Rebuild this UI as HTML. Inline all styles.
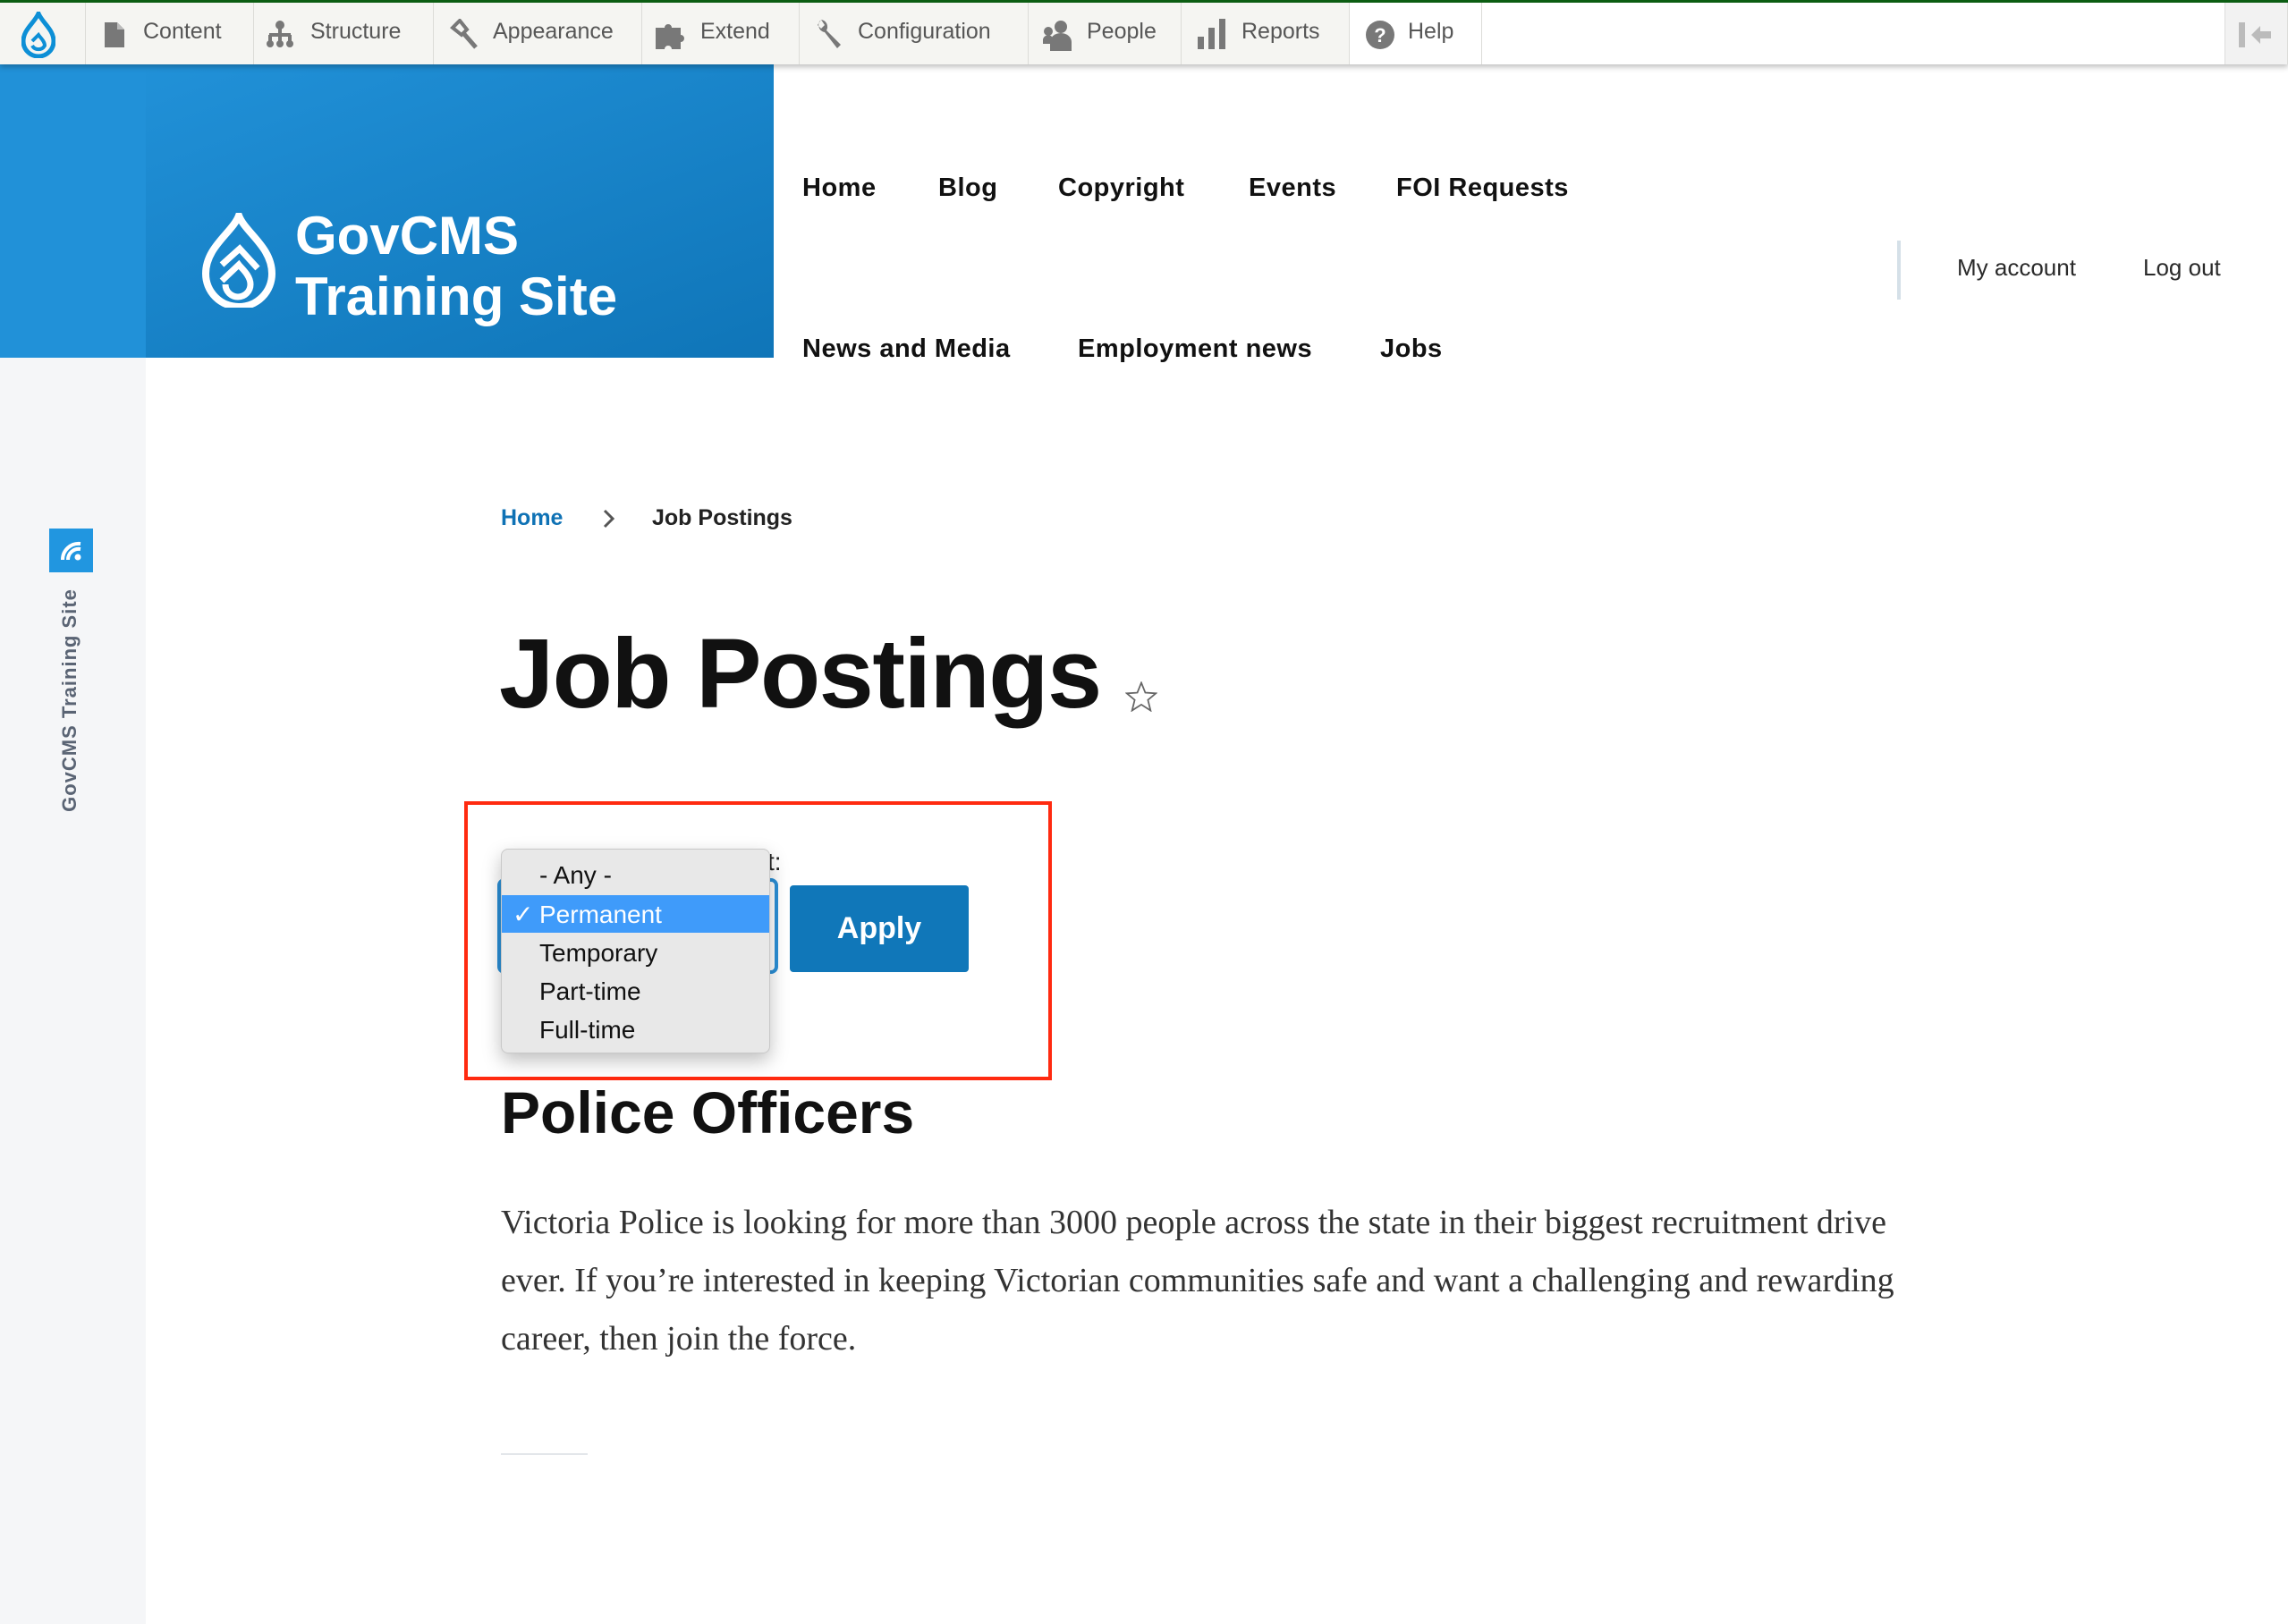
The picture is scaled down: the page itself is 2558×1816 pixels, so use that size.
<!DOCTYPE html>
<html><head><meta charset="utf-8"><style>
*{margin:0;padding:0;box-sizing:border-box}
body{width:2558px;height:1816px;position:relative;background:#fff;font-family:"Liberation Sans",sans-serif;overflow:hidden}
.a{position:absolute;white-space:nowrap}
.tb{position:absolute;left:0;top:0;width:2558px;height:72px;background:#fff;border-top:3px solid #0b5d12;box-shadow:0 3px 6px rgba(0,0,0,.25);z-index:5}
.ti{position:absolute;top:0;height:69px;background:#f5f5f2;border-right:1px solid #dcdcd8}
.tt{position:absolute;top:18px;font-size:25px;color:#565656}
.nav{font-weight:bold;font-size:29px;color:#111;letter-spacing:.5px}
.opt{position:absolute;left:0;width:301px;height:43px;font-size:28px;color:#111;padding-left:42px;line-height:43px}
</style></head><body>
<div class="tb">
 <div class="ti" style="left:0;width:96px"></div>
 <svg class="a" style="left:24px;top:10px" width="38" height="52" viewBox="0 0 38 52"><path d="M19 2 C23 12 36 20 36 33 A17 17 0 0 1 2 33 C2 20 15 12 19 2Z" fill="none" stroke="#0d8fd6" stroke-width="5"/><path d="M12 38 A8 8 0 0 0 26 38 C26 33 21 29 19 26 L12 33" fill="none" stroke="#0d8fd6" stroke-width="4"/></svg>
 <div class="ti" style="left:96px;width:188px"></div>
 <div class="ti" style="left:284px;width:201px"></div>
 <div class="ti" style="left:485px;width:233px"></div>
 <div class="ti" style="left:718px;width:176px"></div>
 <div class="ti" style="left:894px;width:256px"></div>
 <div class="ti" style="left:1150px;width:171px"></div>
 <div class="ti" style="left:1321px;width:188px"></div>
 <div class="ti" style="left:1509px;width:148px;background:#fff"></div>
 <div class="ti" style="left:2487px;width:71px;background:#f2f2f2;border-left:1px solid #ddd"></div>
 <svg class="a" style="left:117px;top:22px" width="22" height="28"><path d="M0 0h14l8 8v20H0z" fill="#787878"/><path d="M14 0v8h8" fill="#bbb"/></svg>
 <svg class="a" style="left:298px;top:20px" width="30" height="32"><circle cx="15" cy="5" r="5" fill="#787878"/><rect x="13" y="8" width="4" height="10" fill="#787878"/><rect x="3" y="14" width="24" height="4" fill="#787878"/><circle cx="4" cy="26" r="4" fill="#787878"/><circle cx="15" cy="26" r="4" fill="#787878"/><circle cx="26" cy="26" r="4" fill="#787878"/><rect x="2" y="16" width="4" height="8" fill="#787878"/><rect x="24" y="16" width="4" height="8" fill="#787878"/><rect x="13" y="16" width="4" height="8" fill="#787878"/></svg>
 <svg class="a" style="left:502px;top:18px" width="32" height="34"><path d="M4 10 L12 2 L20 12 L14 18Z" fill="none" stroke="#787878" stroke-width="4"/><path d="M16 16 L30 32" stroke="#787878" stroke-width="5"/></svg>
 <svg class="a" style="left:733px;top:20px" width="34" height="32"><path d="M0 8h10a4 4 0 1 1 8 0h10v8a4 4 0 1 1 0 8v8H18a4 4 0 1 0-8 0H0z" fill="#787878"/></svg>
 <svg class="a" style="left:910px;top:17px" width="32" height="36"><path d="M8 2a8 8 0 0 0 4 14l14 18 4-4-16-16a8 8 0 0 0-6-12l4 6-4 4-4-4z" fill="#787878"/></svg>
 <svg class="a" style="left:1166px;top:18px" width="34" height="36"><circle cx="20" cy="9" r="7" fill="#787878"/><path d="M8 36v-10a12 10 0 0 1 24 0v10z" fill="#787878"/><circle cx="6" cy="14" r="5" fill="#787878"/><path d="M0 28v-5a6 6 0 0 1 10-3v8z" fill="#787878"/></svg>
 <svg class="a" style="left:1339px;top:18px" width="32" height="34"><rect x="0" y="20" width="7" height="14" fill="#787878"/><rect x="12" y="10" width="7" height="24" fill="#787878"/><rect x="24" y="0" width="7" height="34" fill="#787878"/></svg>
 <svg class="a" style="left:1527px;top:20px" width="32" height="32"><circle cx="16" cy="16" r="16" fill="#787878"/><text x="16" y="24" text-anchor="middle" font-size="22" font-weight="bold" fill="#fff" font-family="Liberation Sans">?</text></svg>
 <div class="tt" style="left:160px">Content</div>
 <div class="tt" style="left:347px">Structure</div>
 <div class="tt" style="left:551px">Appearance</div>
 <div class="tt" style="left:783px">Extend</div>
 <div class="tt" style="left:959px">Configuration</div>
 <div class="tt" style="left:1215px">People</div>
 <div class="tt" style="left:1388px">Reports</div>
 <div class="tt" style="left:1574px">Help</div>
 <svg class="a" style="left:2503px;top:20px" width="40" height="32"><rect x="0" y="2" width="7" height="28" fill="#bbb"/><path d="M14 16 L24 6 V12 H36 V20 H24 V26Z" fill="#bbb"/></svg>
</div>
<div class="a" style="left:0;top:72px;width:163px;height:1744px;background:#f5f6f8"></div>
<div class="a" style="left:0;top:72px;width:163px;height:328px;background:#2191d8"></div>
<div class="a" style="left:163px;top:72px;width:702px;height:328px;background:linear-gradient(160deg,#2191d8,#0f75b8)"></div>
<svg class="a" style="left:226px;top:238px" width="82" height="106" viewBox="0 0 82 106"><path d="M41 3 C48 22 78 38 78 68 A37 37 0 0 1 4 68 C4 38 34 22 41 3Z" fill="none" stroke="#fff" stroke-width="8"/><path d="M26 80 A14 14 0 0 0 54 80 C54 70 44 62 41 58 L22 76 M22 58 L42 40 L62 62" fill="none" stroke="#fff" stroke-width="7"/></svg>
<div class="a" style="left:330px;top:230px;font-size:60px;font-weight:bold;color:#fff;line-height:68px">GovCMS<br>Training Site</div>
<div class="a nav" style="left:897px;top:194px">Home</div>
<div class="a nav" style="left:1049px;top:194px">Blog</div>
<div class="a nav" style="left:1183px;top:194px">Copyright</div>
<div class="a nav" style="left:1396px;top:194px">Events</div>
<div class="a nav" style="left:1561px;top:194px">FOI Requests</div>
<div class="a nav" style="left:897px;top:374px">News and Media</div>
<div class="a nav" style="left:1205px;top:374px">Employment news</div>
<div class="a nav" style="left:1543px;top:374px">Jobs</div>
<div class="a" style="left:2121px;top:269px;width:4px;height:66px;background:#d5e0e8"></div>
<div class="a" style="left:2188px;top:284px;font-size:26px;color:#2a2a2a;font-weight:500">My account</div>
<div class="a" style="left:2396px;top:284px;font-size:26px;color:#2a2a2a;font-weight:500">Log out</div>
<div class="a" style="left:55px;top:591px;width:49px;height:49px;background:#2196e0"></div>
<svg class="a" style="left:64px;top:600px" width="32" height="32"><path d="M6 26 A18 18 0 0 1 26 8 M12 26 A12 12 0 0 1 26 14" fill="none" stroke="#fff" stroke-width="4"/><circle cx="23" cy="23" r="3.5" fill="#fff"/></svg>
<div class="a" style="left:78px;top:783px;transform:translate(-50%,-50%) rotate(-90deg);font-size:22px;font-weight:bold;color:#5a6474;letter-spacing:1px">GovCMS Training Site</div>
<div class="a" style="left:560px;top:565px;font-size:25px;font-weight:bold;color:#0f72b5">Home</div>
<svg class="a" style="left:673px;top:568px" width="16" height="24"><path d="M3 3 L12 12 L3 21" fill="none" stroke="#555" stroke-width="3"/></svg>
<div class="a" style="left:729px;top:565px;font-size:25px;font-weight:bold;color:#222">Job Postings</div>
<div class="a" style="left:558px;top:690px;font-size:110px;font-weight:bold;color:#111;letter-spacing:-1.5px">Job Postings</div>
<svg class="a" style="left:1258px;top:762px" width="36" height="34" viewBox="0 0 24 23"><path d="M12 1 L15 8.5 L23 9 L17 14 L19 22 L12 17.5 L5 22 L7 14 L1 9 L9 8.5Z" fill="none" stroke="#666" stroke-width="1.2"/></svg>
<div class="a" style="left:519px;top:896px;width:657px;height:312px;border:4px solid #ff2a10"></div>
<div class="a" style="left:556px;top:982px;width:314px;height:107px;border:4px solid #2b8fd6;border-radius:8px"></div>
<div class="a" style="left:858px;top:948px;font-size:28px;color:#222">t:</div>
<div class="a" style="left:883px;top:990px;width:200px;height:97px;background:#1077b9;border-radius:4px;color:#fff;font-weight:bold;font-size:34px;text-align:center;line-height:97px">Apply</div>
<div class="a" style="left:560px;top:949px;width:301px;height:229px;background:#e8e8e8;border:1px solid #c8c8c8;border-radius:8px;box-shadow:0 8px 20px rgba(0,0,0,.25);overflow:hidden">
 <div class="opt" style="top:7px">- Any -</div>
 <div class="opt" style="top:51px;background:#3f9bfa;color:#fff;height:42px"><span style="position:absolute;left:12px">✓</span>Permanent</div>
 <div class="opt" style="top:94px">Temporary</div>
 <div class="opt" style="top:137px">Part-time</div>
 <div class="opt" style="top:180px">Full-time</div>
</div>
<div class="a" style="left:560px;top:1206px;font-size:66px;font-weight:bold;color:#111">Police Officers</div>
<div class="a" style="left:560px;top:1335px;width:1700px;font-family:'Liberation Serif',serif;font-size:38px;line-height:65px;color:#333;white-space:normal">Victoria Police is looking for more than 3000 people across the state in their biggest recruitment drive<br>ever. If you’re interested in keeping Victorian communities safe and want a challenging and rewarding<br>career, then join the force.</div>
<div class="a" style="left:560px;top:1625px;width:97px;height:2px;background:#e3e6ea"></div>
</body></html>
